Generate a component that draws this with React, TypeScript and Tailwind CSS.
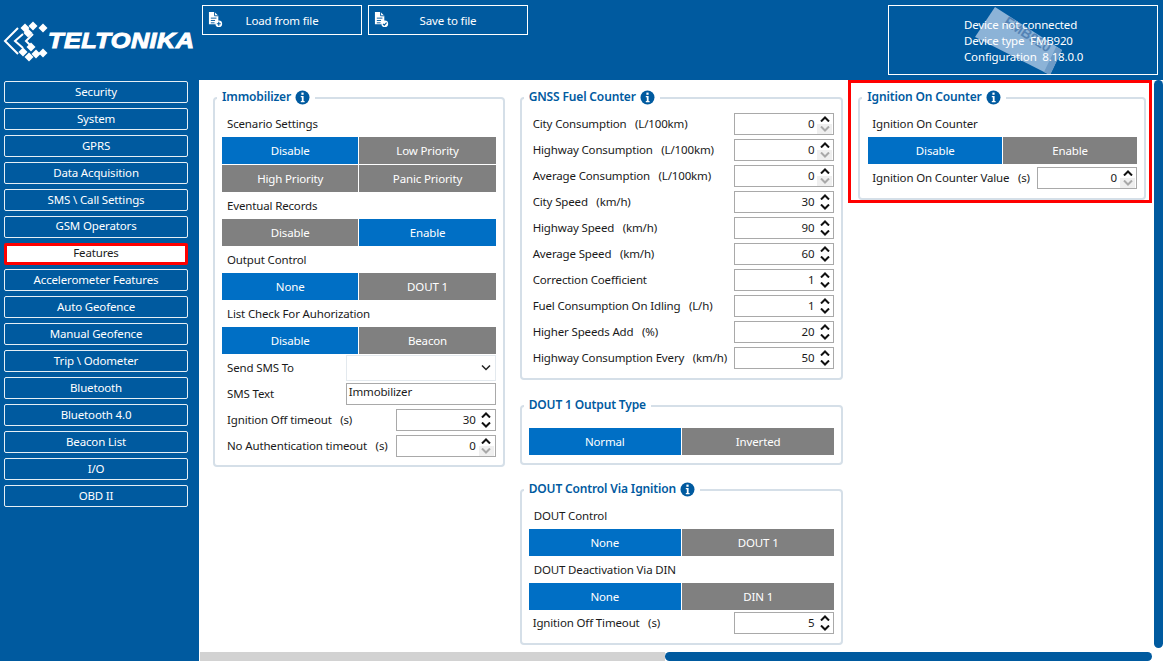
import React from "react";

const font = { fontFamily: '"Noto Sans", "Open Sans", sans-serif' };

const NAV = ["Security","System","GPRS","Data Acquisition","SMS \\ Call Settings","GSM Operators","Features","Accelerometer Features","Auto Geofence","Manual Geofence","Trip \\ Odometer","Bluetooth","Bluetooth 4.0","Beacon List","I/O","OBD II"];

function Info() {
  return (
    <svg width="15" height="15" viewBox="0 0 15 15" className="shrink-0">
      <circle cx="7.5" cy="7.5" r="7" fill="#005a9f" />
      <rect x="6.4" y="2.6" width="2.2" height="2.2" fill="#fff" />
      <path d="M5.8 6h2.8v5h1v1.2H5.8V11h1V7.2h-1z" fill="#fff" />
    </svg>
  );
}

function Fieldset({ title, info, className, children }: { title: string; info?: boolean; className: string; children: React.ReactNode }) {
  return (
    <div className={`relative rounded-[4px] border-2 border-[#d5dfe8] ${className}`}>
      <div className="absolute left-[2px] top-[-11px] flex h-[18px] items-center gap-[4px] bg-white px-[5px] text-[12px] font-semibold leading-none text-[#005a9f]">
        <span>{title}</span>
        {info && <Info />}
      </div>
      {children}
    </div>
  );
}

function Label({ tight, children }: { tight?: boolean; children: React.ReactNode }) {
  return <div className={`flex h-[27px] items-center pt-[1px] text-[11.5px] text-[#1a1a1a] ${tight ? "pl-[4px]" : "pl-[5px]"}`}>{children}</div>;
}

function Btn({ on, children }: { on?: boolean; children: React.ReactNode }) {
  return <div className={`flex h-[27px] items-center justify-center pt-[1px] text-[11.5px] text-white ${on ? "bg-[#006fc5]" : "bg-[#808080]"}`}>{children}</div>;
}

function Pair({ a, b, on }: { a: string; b: string; on: number }) {
  return (
    <div className="grid grid-cols-2 gap-[1px]">
      <Btn on={on === 0}>{a}</Btn>
      <Btn on={on === 1}>{b}</Btn>
    </div>
  );
}

function Chevron({ up, off }: { up?: boolean; off?: boolean }) {
  return (
    <div className={`flex h-[10px] w-[15px] items-center justify-center ${off ? "bg-[#efefef]" : ""}`}>
      <svg width="10" height="6" viewBox="0 0 10 6">
        <path d={up ? "M1 5.5l4-4 4 4" : "M1 .5l4 4 4-4"} fill="none" stroke={off ? "#a8a8a8" : "#111"} strokeWidth="2" />
      </svg>
    </div>
  );
}

function Spin({ value, label, unit, tight }: { value: string; label: string; unit?: string; tight?: boolean }) {
  const zero = value === "0";
  return (
    <div className={`flex h-[26px] items-center justify-between text-[11.5px] text-[#1a1a1a] ${tight ? "pl-[4px]" : "pl-[5px]"}`}>
      <div className="whitespace-pre">{label}{unit ? `   (${unit})` : ""}</div>
      <div className="flex h-[22px] w-[100px] items-center justify-end border border-[#a9a9a9] bg-white pr-[1px]">
        <span className="mr-[3px]">{value}</span>
        <div className="flex flex-col">
          <Chevron up />
          <Chevron off={zero} />
        </div>
      </div>
    </div>
  );
}

function FileIcon({ check }: { check?: boolean }) {
  return (
    <svg width="15" height="16" viewBox="0 0 16 17" className="shrink-0">
      <path d="M1 0h6l4 4v5.5a4 4 0 0 0-3 3.5H1z" fill="#fff" />
      <path d="M7 0v4h4" fill="none" stroke="#005a9f" strokeWidth="1" />
      <path d="M3 6.5h6M3 9h4.5M3 11.5h4" stroke="#005a9f" strokeWidth="1" />
      <circle cx="11.5" cy="12.5" r="3.6" fill="#fff" />
      {check ? (
        <path d="M9.6 12.6l1.4 1.4 2.4-2.6" fill="none" stroke="#005a9f" strokeWidth="1.2" />
      ) : (
        <path d="M11.5 10.4v4.2M9.4 12.5h4.2" stroke="#005a9f" strokeWidth="1.2" />
      )}
    </svg>
  );
}

function Logo() {
  const dia = [[25,27],[33,25],[43,27],[28,32],[23,51],[29,56],[36,53],[43,52],[31,46]];
  return (
    <div className="relative h-[40px] w-[194px] shrink-0">
      <svg width="52" height="46" viewBox="0 0 52 46" className="absolute left-[-2px] top-[-3px]">
        <g transform="translate(0,-20)">
          {dia.map(([x, y], i) => (
            <path key={i} d={`M${x} ${y - 4.5}l4.5 4.5-4.5 4.5-4.5-4.5z`} fill="#fff" />
          ))}
          <path d="M18 27L5 40l13 13" fill="none" stroke="#fff" strokeWidth="2" />
          <path d="M23 33l-8 7 8 7" fill="none" stroke="#fff" strokeWidth="2" />
          <path d="M33 33l-7 7 7 7" fill="none" stroke="#fff" strokeWidth="2" />
        </g>
      </svg>
      <span className="absolute left-[46px] top-[3px] origin-left scale-x-[1.15] text-[22px] font-bold italic leading-[28px] tracking-[0.4px] text-white" style={{ fontFamily: '"Liberation Sans", sans-serif', WebkitTextStroke: "1px #fff" }}>TELTONIKA</span>
    </div>
  );
}

function DeviceBox() {
  return (
    <div className="relative mt-[5px] h-[70px] w-[270px] overflow-hidden border border-white">
      <svg width="270" height="70" viewBox="888 5 270 70" className="absolute left-[-1px] top-[-1px]">
        <polygon points="995,7 1062,50 1050,75 975,37" fill="#8cb3d7" />
        <polygon points="1062,50 1050,75 1044,72 1056,47" fill="#6e9bc6" />
        <text x="1003" y="24" fontSize="14" fontWeight="700" fill="#5483b5" transform="rotate(33 1003 24)" fontFamily="Liberation Sans">FMB920</text>
      </svg>
      <div className="absolute left-[75px] top-[11px] whitespace-pre text-[11.5px] leading-[16px] text-white">
        <div>Device not connected</div>
        <div>Device type  FMB920</div>
        <div>Configuration  8.18.0.0</div>
      </div>
    </div>
  );
}

export default function App() {
  return (
    <div className="flex h-screen w-full flex-col overflow-hidden bg-[#005a9f] tracking-[-0.15px]" style={font}>
      <header className="flex h-[80px] shrink-0">
        <div className="mt-[24px] pl-[2px]"><Logo /></div>
        <div className="mt-[5px] ml-[6px] flex h-[30px] gap-[6px]">
          {[["Load from file", false], ["Save to file", true]].map(([t, c]) => (
            <div key={t as string} className="relative flex w-[160px] items-center justify-center border border-white pt-[1px] text-[11.5px] text-white">
              <span className="absolute left-[5px] top-[6px]"><FileIcon check={c as boolean} /></span>
              {t as string}
            </div>
          ))}
        </div>
        <div className="ml-auto mr-[5px]"><DeviceBox /></div>
      </header>
      <div className="flex min-h-0 flex-1">
        <nav className="flex w-[199px] shrink-0 flex-col gap-[4.93px] pl-[4px] pt-[1px]">
          {NAV.map((n) =>
            n === "Features" ? (
              <div key={n} className="flex h-[22px] w-[184px] items-center justify-center rounded-[2px] border-[3px] border-[#ff0000] bg-white pb-[1px] text-[11.5px] text-[#1a1a1a]">{n}</div>
            ) : (
              <div key={n} className="flex h-[22px] w-[184px] items-center justify-center rounded-[2px] border border-white/90 pb-[1px] text-[11.5px] text-white">{n}</div>
            )
          )}
        </nav>
        <div className="flex min-w-0 flex-1 flex-col bg-white">
          <div className="flex min-h-0 flex-1">
            <div className="flex min-w-0 flex-1 items-start pl-[14px]">
              <div className="mt-[17px] w-[292px]">
                <Fieldset title="Immobilizer" info className="px-[7px] pb-[6px] pt-[11px]">
                  <Label>Scenario Settings</Label>
                  <div className="flex flex-col gap-[1px]">
                    <Pair a="Disable" b="Low Priority" on={0} />
                    <Pair a="High Priority" b="Panic Priority" on={2} />
                  </div>
                  <Label>Eventual Records</Label>
                  <Pair a="Disable" b="Enable" on={1} />
                  <Label>Output Control</Label>
                  <Pair a="None" b="DOUT 1" on={0} />
                  <Label>List Check For Auhorization</Label>
                  <Pair a="Disable" b="Beacon" on={0} />
                  <div className="flex h-[27px] items-center justify-between pl-[5px] text-[11.5px] text-[#1a1a1a]">
                    <span>Send SMS To</span>
                    <div className="flex h-[26px] w-[150px] items-center justify-end border border-[#e3e9ee] bg-white pr-[3px]">
                      <svg width="12" height="8" viewBox="0 0 12 8"><path d="M2 1.5l4 4 4-4" fill="none" stroke="#222" strokeWidth="1.5" /></svg>
                    </div>
                  </div>
                  <div className="flex h-[26px] items-center justify-between pl-[5px] text-[11.5px] text-[#1a1a1a]">
                    <span>SMS Text</span>
                    <div className="flex h-[22px] w-[150px] items-start border border-[#a9a9a9] bg-white pl-[2px] leading-[16px]">Immobilizer</div>
                  </div>
                  <Spin label="Ignition Off timeout" unit="s" value="30" />
                  <Spin label="No Authentication timeout" unit="s" value="0" />
                </Fieldset>
              </div>
              <div className="ml-[15px] mt-[17px] flex w-[324px] flex-col">
                <Fieldset title="GNSS Fuel Counter" info className="px-[7px] pb-[7px] pt-[12px]">
                  <Spin tight label="City Consumption" unit="L/100km" value="0" />
                  <Spin tight label="Highway Consumption" unit="L/100km" value="0" />
                  <Spin tight label="Average Consumption" unit="L/100km" value="0" />
                  <Spin tight label="City Speed" unit="km/h" value="30" />
                  <Spin tight label="Highway Speed" unit="km/h" value="90" />
                  <Spin tight label="Average Speed" unit="km/h" value="60" />
                  <Spin tight label="Correction Coefficient" value="1" />
                  <Spin tight label="Fuel Consumption On Idling" unit="L/h" value="1" />
                  <Spin tight label="Higher Speeds Add" unit="%" value="20" />
                  <Spin tight label="Highway Consumption Every" unit="km/h" value="50" />
                </Fieldset>
                <Fieldset title="DOUT 1 Output Type" className="mt-[25px] px-[7px] pb-[8px] pt-[21px]">
                  <Pair a="Normal" b="Inverted" on={0} />
                </Fieldset>
                <Fieldset title="DOUT Control Via Ignition" info className="mt-[24px] px-[7px] pb-[7px] pt-[11px]">
                  <Label>DOUT Control</Label>
                  <Pair a="None" b="DOUT 1" on={0} />
                  <Label>DOUT Deactivation Via DIN</Label>
                  <Pair a="None" b="DIN 1" on={0} />
                  <Spin tight label="Ignition Off Timeout" unit="s" value="5" />
                </Fieldset>
              </div>
              <div className="ml-[5px] w-[304px] border-[3px] border-[#ff0000] pl-[7px] pr-[3px] pt-[14px]">
                <Fieldset title="Ignition On Counter" info className="pb-[7px] pl-[8px] pr-[7px] pt-[11px]">
                  <Label tight>Ignition On Counter</Label>
                  <Pair a="Disable" b="Enable" on={0} />
                  <div className="pt-[1px]">
                    <Spin tight label="Ignition On Counter Value" unit="s" value="0" />
                  </div>
                </Fieldset>
              </div>
            </div>
            <div className="flex w-[11px] shrink-0 flex-col items-end">
              <div className="h-[568px] w-[9px] rounded-[5px] bg-[#005a9f]" />
            </div>
          </div>
          <div className="flex h-[9px] shrink-0 pl-[1px] pr-[11px]">
            <div className="w-[465px] bg-[#d2d2d2]" />
            <div className="flex-1 rounded-[5px] bg-[#005a9f]" />
          </div>
        </div>
      </div>
    </div>
  );
}
